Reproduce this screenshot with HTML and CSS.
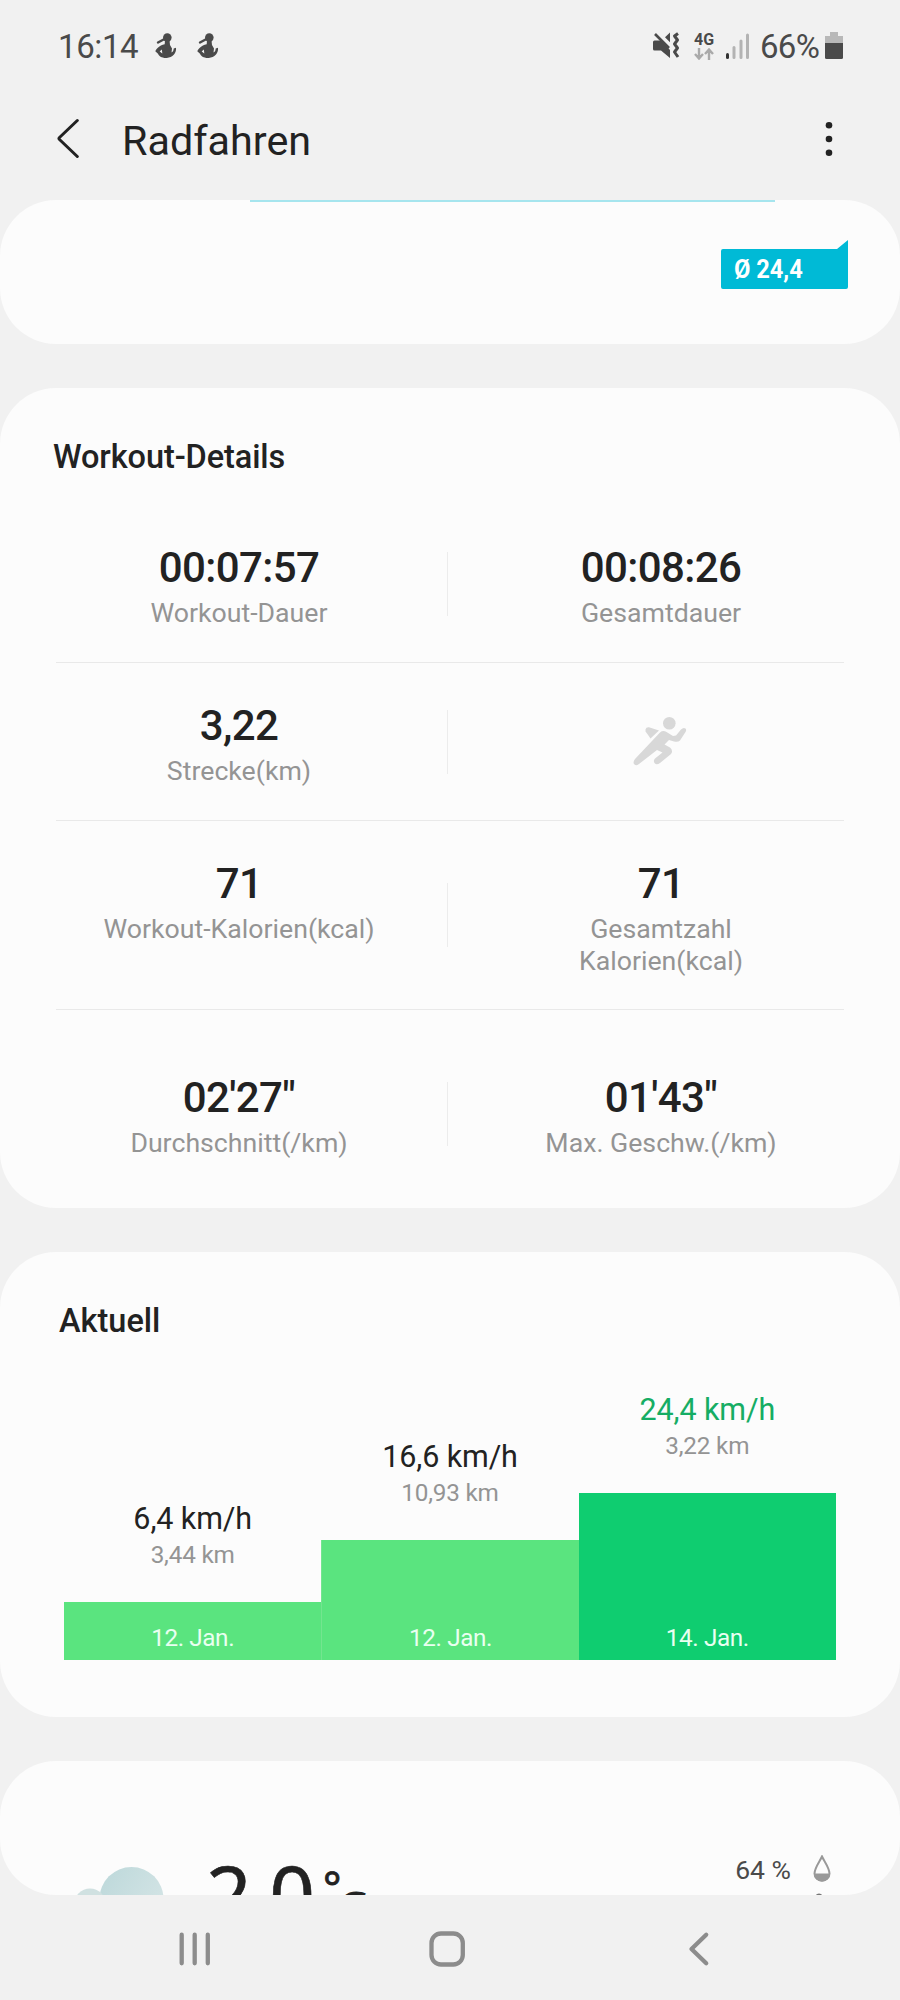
FILE: index.html
```html
<!DOCTYPE html>
<html lang="de">
<head>
<meta charset="utf-8">
<title>Radfahren</title>
<link rel="stylesheet" href="styles.css">
</head>
<body>
<div class="screen">
  <header class="status">
    <span class="clock">16:14</span>
    <svg class="notif" viewBox="0 0 22 26"><use href="#buddy"/></svg>
    <svg class="notif second" viewBox="0 0 22 26"><g id="buddy"><circle cx="12.3" cy="4.600" r="4.300"/><path d="M9.500 6 3 9.500" stroke-width="2.400"/><path class="solid" d="M10 7.500h4.500l.5 4.500 2 3.500-.5 4c1.800-.8 2-2 2.200-4l2.300-.7c.7 5.500-3.500 9.700-9.200 10.200-5 .3-8-2-8.800-4.200L.3 18.300C1 16 4 12.500 9.700 11.200z"/><path class="cut" d="M4.700 18.500 6.800 16.500 7.300 20.500z"/></g></svg>
    <svg class="mute" viewBox="0 0 27 27"><path class="solid" d="M1.500 8.500H8L17 18v8L8 18.500H1.500Q0 18.500 0 17v-7Q0 8.500 1.500 8.500zM17 .5v9.700l-5-5z"/><path d="M2 2 16 16" stroke-width="2.600"/><path d="M25 1.500 21.500 4 24.500 8 21.500 12 24.500 16 21.500 20 25 25" stroke-width="3"/></svg>
    <div class="network"><span>4G</span><svg viewBox="0 0 20 12"><path d="M5 0v10M1 6l4 4.500L9 6M15 12V2M11 6l4-4.500L19 6"/></svg></div>
    <svg class="signal" viewBox="0 0 23 26"><path class="on" d="M1.500 21.500v3"/><path d="M8 14.500v10M15 8v16.500M21.500 2v22.500"/></svg>
    <span class="percent">66%</span>
    <svg class="battery" viewBox="0 0 18 27"><path fill="#b8b8b8" d="M5 0h8v4h5v8H0V4h5z"/><path fill="#4a4a4a" d="M0 11h18v14.500a1.500 1.500 0 0 1-1.500 1.500h-15A1.500 1.500 0 0 1 0 25.500z"/></svg>
  </header>
  <div class="appbar">
    <svg class="back" viewBox="0 0 24 42"><path d="M20.300 2.500 2.500 19.500Q1.500 20.500 2.500 21.500L20.300 38.500"/></svg>
    <h1>Radfahren</h1>
    <svg class="more" viewBox="0 0 8 36"><circle cx="4" cy="4.300" r="3.300"/><circle cx="4" cy="18" r="3.300"/><circle cx="4" cy="31.700" r="3.300"/></svg>
  </div>
  <main>
    <section class="card speed">
      <div class="track"></div>
      <div class="badge"><svg viewBox="0 0 127 50"><path d="M127 0v47a2 2 0 0 1-2 2H2a2 2 0 0 1-2-2V11a2 2 0 0 1 2-2h114z"/></svg><span>Ø 24,4</span></div>
    </section>
    <section class="card details">
      <h2>Workout-Details</h2>
      <div class="row">
        <div class="cell"><b>00:07:57</b><p>Workout-Dauer</p></div><i></i>
        <div class="cell"><b>00:08:26</b><p>Gesamtdauer</p></div>
      </div>
      <div class="row">
        <div class="cell"><b>3,22</b><p>Strecke(km)</p></div><i></i>
        <div class="cell icon"><svg viewBox="0 0 54 50"><circle cx="36.300" cy="7.300" r="6.300"/><path class="solid" d="M12.500 13.500Q13 11 16 11.300L26 14.500 17.500 22.500 12.600 15.500z"/><path class="solid" d="M27 16.500Q30 14 33.500 16L40 20 43 19.500 48 13.500Q50.500 11 52.500 12.500 53.800 13.800 52.500 16L47 24.500Q45 26.500 41 25.500L36 24 31.500 28.500 37 31.500Q40.500 34.500 38 38L27 47Q23.500 49.500 21.500 47 20 44.500 22 42.500L29.500 36.500 24 34 6 48Q2.500 50.500 .8 47.800 0 45.500 2 43z"/></svg></div>
      </div>
      <div class="row tall">
        <div class="cell"><b>71</b><p>Workout-Kalorien(kcal)</p></div><i></i>
        <div class="cell"><b>71</b><p>Gesamtzahl<br>Kalorien(kcal)</p></div>
      </div>
      <div class="row last">
        <div class="cell"><b>02'27"</b><p>Durchschnitt(/km)</p></div><i></i>
        <div class="cell"><b>01'43"</b><p>Max. Geschw.(/km)</p></div>
      </div>
    </section>
    <section class="card recent">
      <h2>Aktuell</h2>
      <div class="chart">
        <div class="col"><strong>6,4 km/h</strong><small>3,44 km</small><div class="bar" style="height:58px">12. Jan.</div></div>
        <div class="col"><strong>16,6 km/h</strong><small>10,93 km</small><div class="bar" style="height:120px">12. Jan.</div></div>
        <div class="col current"><strong>24,4 km/h</strong><small>3,22 km</small><div class="bar" style="height:167px">14. Jan.</div></div>
      </div>
    </section>
    <section class="card weather">
      <svg class="cloud" viewBox="0 0 90 60"><defs><linearGradient id="sky" x1="0" y1="0" x2="1" y2=".6"><stop offset="0" stop-color="#bcd8da"/><stop offset="1" stop-color="#d3e4e5"/></linearGradient></defs><circle cx="57.500" cy="33" r="32" fill="url(#sky)"/><circle cx="16" cy="38.500" r="16" fill="#d0e1e1"/></svg>
      <div class="temp"><span>2,0</span><span class="deg">°</span><span class="unit">C</span></div>
      <div class="humidity"><span>64 %</span><svg viewBox="0 0 18 40"><path d="M9 1.500C7 6 1.500 13 1.500 18.500a7.500 7.200 0 0 0 15 0C16.500 13 11 6 9 1.500z" fill="none" stroke="#999" stroke-width="2"/><path d="M1 18.500h16a8 8 0 0 1-16 0z" fill="#999"/><circle cx="6" cy="42" r="3.500" fill="#777"/></svg></div>
    </section>
  </main>
  <nav>
    <svg viewBox="0 0 33 36"><path d="M3.700 3.700v28.600M16.700 3.700v28.600M29.800 3.700v28.600"/></svg>
    <svg viewBox="0 0 36 36"><rect x="2.500" y="2.500" width="31.300" height="31" rx="9.500"/></svg>
    <svg viewBox="0 0 22 36"><path d="M18.200 3.700 3.500 18 18.200 32.300"/></svg>
  </nav>
</div>
</body>
</html>
```
FILE: styles.css
```css
* { box-sizing: border-box; }
body { margin: 0; background: #f1f1f1; font-family: Roboto, "Liberation Sans", sans-serif; color: #222; }
h1, h2, p { margin: 0; }
svg { display: block; flex: none; }
.screen { width: 900px; height: 2000px; overflow: hidden; display: flex; flex-direction: column; }

.status { height: 94px; display: flex; align-items: center; padding: 0 57px 0 58px; color: #4a4a4a; font-size: 33px; line-height: 40px; }
.clock { width: 97px; letter-spacing: -.4px; }
.notif { width: 22px; height: 26px; margin-top: -3px; fill: #4a4a4a; stroke: #4a4a4a; stroke-width: 0; stroke-linecap: round; }
.notif.second { margin-left: 20px; }
.cut { fill: #f1f1f1; }
.mute { width: 27px; height: 27px; margin: -3px 14px 0 auto; fill: none; stroke: #4a4a4a; stroke-linejoin: round; }
.mute .solid { fill: #4a4a4a; stroke: none; }
.network { width: 20px; margin: -3px 12px 0 0; font: 700 16px/16px Roboto, sans-serif; display: flex; flex-direction: column; align-items: center; }
.network svg { width: 20px; height: 12px; margin-top: 0; fill: none; stroke: #aaa; stroke-width: 2.400; }
.signal { width: 23px; height: 26px; margin-top: -2px; fill: none; stroke: #b3b3b3; stroke-width: 3; stroke-linecap: round; }
.signal .on { stroke: #333; }
.percent { width: 60px; margin: 0 5px 0 11px; letter-spacing: -.7px; white-space: nowrap; }
.battery { width: 18px; height: 27px; margin-top: -3px; }

.appbar { height: 106px; padding: 0 67px 16px 57px; display: flex; align-items: center; }
.back { width: 24px; height: 42px; fill: none; stroke: #222; stroke-width: 3; stroke-linecap: round; stroke-linejoin: round; }
h1 { margin: 4px auto 0 41px; font-size: 41.300px; line-height: 48px; font-weight: 400; }
.more { width: 8px; height: 36px; fill: #222; }

main { display: flex; flex-direction: column; gap: 44px; height: 1695px; flex: none; }
.card { background: #fcfcfc; border-radius: 56px; overflow: hidden; flex: none; }
.speed { height: 144px; display: flex; flex-direction: column; }
.track { height: 2px; width: 525px; margin-left: 250px; background: #a6e5ee; }
.badge { align-self: flex-end; display: grid; width: 127px; height: 50px; margin: 38px 52px 0 0; }
.badge > * { grid-area: 1 / 1; }
.badge svg { width: 127px; height: 50px; fill: #00bad6; }
.badge span { color: #fff; font-weight: 700; font-size: 26px; line-height: 30px; padding: 14px 0 0 13px; justify-self: start; transform: scaleX(.91); transform-origin: 13px 0; white-space: nowrap; }

h2 { font-size: 32.500px; line-height: 40px; font-weight: 500; letter-spacing: -.1px; }
.details { height: 820px; padding: 49px 56px 0; }
.details h2 { margin: 0 0 28px -3px; }
.row { height: 158px; display: grid; grid-template-columns: 366px 1px 1fr; column-gap: 25px; align-items: center; border-bottom: 1px solid #e9e9e9; }
.row i { height: 64px; background: #ececec; }
.row.tall { height: 189px; }
.row.last { height: 157px; margin-top: 25px; border: 0; }
.cell { align-self: start; padding-top: 38px; text-align: center; }
.cell:last-child { padding-left: 5px; }
.cell b { display: block; font-size: 42px; line-height: 50px; font-weight: 500; letter-spacing: -.6px; }
.cell p { font-size: 26.700px; line-height: 32px; color: #949494; margin-top: 4px; }
.cell.icon:last-child { padding: 53px 0 0 3px; }
.icon svg { width: 54px; height: 50px; margin: 0 auto; fill: #d8d8d8; }

.recent { height: 465px; padding: 49px 64px 0 64px; }
.recent h2 { margin-left: -5px; letter-spacing: 0; }
.chart { height: 319px; display: grid; grid-template-columns: repeat(3, 1fr); align-items: end; }
.col { display: flex; flex-direction: column; align-items: center; }
.col strong { font-size: 30.500px; line-height: 36px; font-weight: 400; letter-spacing: -.1px; }
.col small { font-size: 24.300px; letter-spacing: -.2px; line-height: 30px; color: #949494; margin: 3px 0 32px; }
.bar { width: 100%; background: #5ae47f; color: #e9fff0; font-size: 24.300px; letter-spacing: -.4px; line-height: 30px; padding-bottom: 7px; display: flex; align-items: flex-end; justify-content: center; }
.col + .col:not(.current) .bar { border-left: 1px solid #73e58f; }
.current strong { color: #16ad64; }
.current .bar { background: #0fcd70; }

.weather { height: 134px; padding: 0 69px 0 74px; display: flex; align-items: flex-start; }
.cloud { width: 90px; height: 60px; margin-top: 105px; }
.temp { display: flex; margin: 77px auto 0 42px; font: 80px/109px "Noto Sans", sans-serif; color: #222; }
.temp span:first-child { letter-spacing: -2px; -webkit-text-stroke: .6px #222; }
.deg { font-size: 43px; line-height: 59px; margin-left: 10px; margin-top: 19px; -webkit-text-stroke: .8px #222; }
.unit { font-size: 44px; line-height: 60px; margin-top: 38px; margin-left: -3px; -webkit-text-stroke: 1.200px #222; }
.humidity { display: flex; margin-top: 93px; color: #4a4a4a; font-size: 26.500px; line-height: 32px; }
.humidity span { margin-right: 22px; white-space: nowrap; }
.humidity svg { width: 18px; height: 40px; margin-top: 1px; }

nav { height: 105px; flex: none; display: flex; align-items: center; padding: 0 190px 3px 178px; justify-content: space-between; }
nav svg { height: 36px; fill: none; stroke: #8c8c8c; stroke-width: 4.300; stroke-linecap: round; stroke-linejoin: round; margin-top: 5px; }
nav svg:nth-child(1) { width: 33px; }
nav svg:nth-child(2) { width: 36px; margin-right: 6px; }
nav svg:nth-child(3) { width: 22px; }
```
